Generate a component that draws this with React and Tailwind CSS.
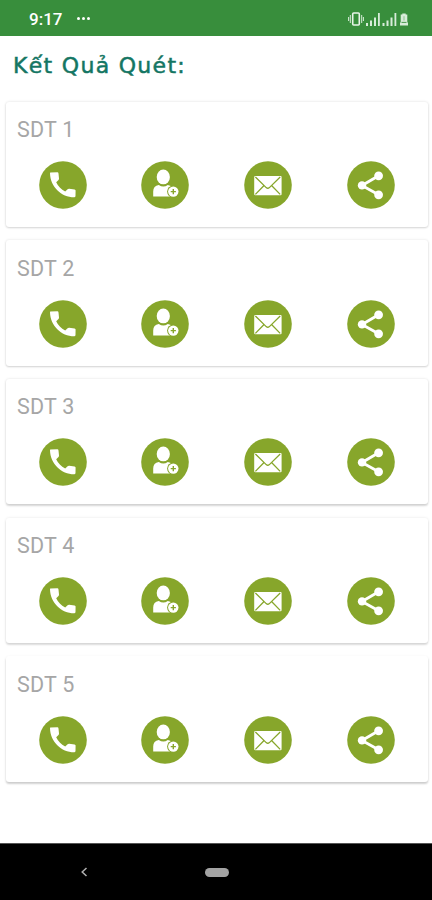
import React from "react";

const GREEN = "#87a62b";

function Disc({ label, children }) {
  return (
    <button type="button" aria-label={label} className="size-12 shrink-0">
      <svg viewBox="0 0 48 48" className="block size-12">
        <circle cx="24" cy="24" r="23.8" fill={GREEN} />
        {children}
      </svg>
    </button>
  );
}

function CallButton() {
  return (
    <Disc label="Call">
      <path
        fill="#fff"
        d="M11.4 11.5 L18.4 11.2 Q19.4 11.3 19.5 12.4 L20 17.6 Q20.1 18.4 19.5 19 L17.2 21.2 C18.9 25 22.2 28.4 26.2 30.6 L28.6 28.2 Q29.3 27.6 30.2 27.7 L35.6 28.4 Q36.6 28.6 36.6 29.6 L36.5 35 Q36.4 36.2 35.2 36.2 C22.2 36.2 11.3 25.6 11 12.2 Q11 11.6 11.4 11.5 Z"
      />
    </Disc>
  );
}

function AddContactButton() {
  return (
    <Disc label="Add contact">
      <ellipse cx="22.3" cy="15.9" rx="6.6" ry="7.4" fill="#fff" />
      <path
        fill="#fff"
        d="M12.2 35.6 V30.4 Q12.2 25 17.8 24 Q22.3 27 26.8 24 Q29.4 24.5 31 26 L31 35.6 Z"
      />
      <circle cx="32.3" cy="30.6" r="6.2" fill={GREEN} />
      <circle cx="32.3" cy="30.6" r="5.2" fill="#fff" />
      <path d="M32.3 28 V33.2 M29.7 30.6 H34.9" stroke={GREEN} strokeWidth="1.4" />
    </Disc>
  );
}

function MailButton() {
  return (
    <Disc label="Message">
      <rect x="10.2" y="14.9" width="27.4" height="19.4" rx="1.2" fill="#fff" />
      <path
        d="M11.4 16 L22.2 26.6 Q23.8 28 25.4 26.6 L36.2 16 M11.4 33.4 L19.8 24.8 M36.2 33.4 L27.8 24.8"
        fill="none"
        stroke={GREEN}
        strokeWidth="1.3"
      />
    </Disc>
  );
}

function ShareButton() {
  return (
    <Disc label="Share">
      <path d="M31.6 14.8 L15 24.4 L31.6 33.8" fill="none" stroke="#fff" strokeWidth="2.9" />
      <circle cx="15" cy="24.4" r="4.2" fill="#fff" />
      <circle cx="31.6" cy="14.8" r="4.4" fill="#fff" />
      <circle cx="31.6" cy="33.8" r="4.4" fill="#fff" />
    </Disc>
  );
}

const cards = [
  { title: "SDT 1", shadow: "shadow-[0_1px_2px_rgba(0,0,0,0.12),0_0_3px_rgba(0,0,0,0.12)]" },
  { title: "SDT 2", shadow: "shadow-[0_1px_2px_rgba(0,0,0,0.14),0_0_3px_rgba(0,0,0,0.11)]" },
  { title: "SDT 3", shadow: "shadow-[0_1.5px_2px_rgba(0,0,0,0.15),0_0_3px_rgba(0,0,0,0.1)]" },
  { title: "SDT 4", shadow: "shadow-[0_2px_2px_rgba(0,0,0,0.13),0_0_3px_rgba(0,0,0,0.1)]" },
  { title: "SDT 5", shadow: "shadow-[0_2px_2px_rgba(0,0,0,0.14),0_1px_3px_rgba(0,0,0,0.1)]" },
];

function Card({ title, shadow }) {
  return (
    <section className={`h-[125.5px] shrink-0 rounded-[3px] bg-white pt-[14.5px] ${shadow}`}>
      <h2 className="ml-[11.5px] text-[21.5px] leading-[27px] tracking-[0.2px] text-[#a6a6a6]">{title}</h2>
      <div className="mt-[18px] ml-[33px] flex gap-[54.8px]">
        <CallButton />
        <AddContactButton />
        <MailButton />
        <ShareButton />
      </div>
    </section>
  );
}

function StatusBar() {
  return (
    <header className="flex h-9 shrink-0 items-center justify-between bg-[#388e3c] pr-[22px] pl-[29px] text-white">
      <div className="flex items-center gap-[15px] pt-[1px]">
        <span className="text-[17px] leading-5 font-medium">9:17</span>
        <span className="flex gap-[2px]">
          <i className="size-[3px] rounded-full bg-white" />
          <i className="size-[3px] rounded-full bg-white" />
          <i className="size-[3px] rounded-full bg-white" />
        </span>
      </div>
      <svg viewBox="0 0 62 16" className="mt-px h-4 w-[62px]" fill="#d8ecd9">
        <rect x="4.7" y="2" width="6.6" height="12" rx="1" fill="none" stroke="#e9f5e9" strokeWidth="1.6" />
        <path d="M2.3 4 V12 M0.6 6 V10 M13.7 4 V12 M15.4 6 V10" stroke="#d8ecd9" strokeWidth="1" />
        <path d="M18 12h2v3h-2z M22 9.5h2v5.5h-2z M26 6.5h2v8.5h-2z M30 2h1.8v13H30z" />
        <path d="M34.5 12h2v3h-2z M38.5 9.5h2v5.5h-2z M42.5 6.5h2v8.5h-2z M46.5 2h1.8v13h-1.8z" />
        <path d="M54.3 2.4h3.4v1h1.6v8h.7v3h-8v-3h.7v-8h1.6z" />
        <path d="M53.5 11.4 H58.5" stroke="#388e3c" strokeWidth="0.9" />
        <path d="M56 5.2 V9.5" stroke="#8cc08e" strokeWidth="1" />
      </svg>
    </header>
  );
}

export default function App() {
  return (
    <div className="flex h-[900px] w-[432px] flex-col overflow-hidden bg-white font-['Roboto',sans-serif]">
      <StatusBar />
      <main className="flex min-h-0 flex-1 flex-col">
        <h1 className="mt-[14px] ml-[13px] h-8 text-[22px] leading-8 font-normal tracking-[1.3px] whitespace-nowrap text-[#147663] [-webkit-text-stroke:0.5px_#147663] font-['DejaVu_Sans',sans-serif]">
          Kết Quả Quét:
        </h1>
        <div className="mt-[19.5px] mr-[4px] ml-[5.5px] flex flex-col gap-[13.2px]">
          {cards.map((card) => (
            <Card key={card.title} {...card} />
          ))}
        </div>
      </main>
      <nav className="flex h-[57px] shrink-0 items-center border-t border-[#555] bg-black">
        <button type="button" aria-label="Back" className="ml-[80px]">
          <svg viewBox="0 0 8 10" className="block h-[10px] w-2" fill="none" stroke="#b0b0b0" strokeWidth="1.5">
            <path d="M6.5 1 L2.2 5 L6.5 9" />
          </svg>
        </button>
        <button type="button" aria-label="Home" className="ml-[117px] h-[9px] w-6 rounded-full bg-[#a3a3a3]" />
      </nav>
    </div>
  );
}
